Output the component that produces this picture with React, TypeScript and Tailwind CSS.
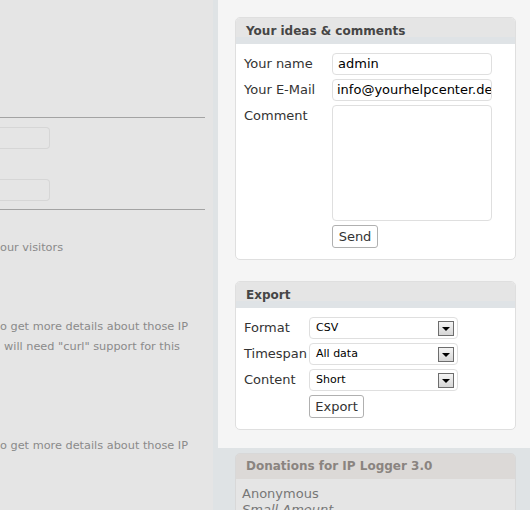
import React from "react";

const font = { fontFamily: '"DejaVu Sans", Verdana, sans-serif' };

function SelectBox({ value }: { value: string }) {
  return (
    <div className="flex h-[22px] w-[149px] items-center justify-between rounded-[4px] border border-[#dfdfdf] bg-white pl-[6px] pr-[3px]">
      <span className="text-[11px] text-black">{value}</span>
      <span className="flex h-[15px] w-[16px] items-center justify-center border border-[#6d6d6d] bg-gradient-to-b from-[#f4f4f4] to-[#d6d6d6]">
        <span className="mt-[2px] h-0 w-0 border-x-[4px] border-t-[4px] border-x-transparent border-t-black" />
      </span>
    </div>
  );
}

function Panel({ title, children }: { title: string; children: React.ReactNode }) {
  return (
    <section className="w-[281px] overflow-hidden rounded-[5px] border border-[#dfdfdf] bg-white">
      <h3 className="h-[26px] bg-[linear-gradient(#e5e5e5_0%,#e5e5e5_72%,#dfe3e6_72%,#dfe3e6_100%)] pl-[10px] pt-[6px] text-[12px] font-bold leading-[14px] text-[#464646]">
        {title}
      </h3>
      {children}
    </section>
  );
}

export default function App() {
  return (
    <div className="flex h-[510px] w-[530px] overflow-hidden text-[13px]" style={font}>
      <div className="relative w-[213px] shrink-0 bg-[#e5e5e5] text-[11.3px] text-[#8a8a8a]">
        <div className="pt-[117px] pr-[8px]">
          <div className="h-px bg-[#a3a3a3]" />
          <div className="mt-[9px] h-[22px] w-[50px] rounded-r-[4px] border border-l-0 border-[#d6d6d6]" />
          <div className="mt-[30px] h-[22px] w-[50px] rounded-r-[4px] border border-l-0 border-[#d6d6d6]" />
          <div className="mt-[8px] h-px bg-[#a3a3a3]" />
        </div>
        <p className="mt-[28px] whitespace-nowrap leading-[20px]">our visitors</p>
        <p className="mt-[59px] whitespace-nowrap leading-[20px]">o get more details about those IP</p>
        <p className="whitespace-nowrap pl-[4px] leading-[20px]">will need "curl" support for this</p>
        <p className="mt-[79px] whitespace-nowrap leading-[20px]">o get more details about those IP</p>
      </div>
      <div className="flex-1 bg-[#dfe3e5] pl-[5px]">
        <div className="h-[448px] bg-[#f5f5f5] pl-[17px] pt-[17px]">
          <Panel title="Your ideas & comments">
            <div className="grid grid-cols-[88px_1fr] gap-y-[4px] px-[8px] pb-[11px] pt-[9px] text-[#333]">
              <span className="leading-[22px]">Your name</span>
              <div className="flex h-[22px] w-[160px] items-center rounded-[4px] border border-[#dfdfdf] pl-[5px] text-black">admin</div>
              <span className="leading-[22px]">Your E-Mail</span>
              <div className="flex h-[22px] w-[160px] items-center overflow-hidden whitespace-nowrap rounded-[4px] border border-[#dfdfdf] pl-[4px] text-black">info@yourhelpcenter.de</div>
              <span className="leading-[22px]">Comment</span>
              <div className="h-[116px] w-[160px] rounded-[4px] border border-[#dfdfdf]" />
              <span />
              <button className="h-[23px] w-[46px] rounded-[3px] border border-[#b0b0b0] bg-white leading-[20px] text-[#333]">Send</button>
            </div>
          </Panel>
          <div className="h-[21px]" />
          <Panel title="Export">
            <div className="grid grid-cols-[65px_1fr] gap-y-[4px] px-[8px] pb-[11px] pt-[9px] text-[#333]">
              <span className="leading-[22px]">Format</span>
              <SelectBox value="CSV" />
              <span className="leading-[22px]">Timespan</span>
              <SelectBox value="All data" />
              <span className="leading-[22px]">Content</span>
              <SelectBox value="Short" />
              <span />
              <button className="h-[23px] w-[55px] rounded-[3px] border border-[#b0b0b0] bg-white leading-[20px] text-[#333]">Export</button>
            </div>
          </Panel>
        </div>
        <div className="pl-[17px] pt-[5px]">
          <section className="w-[281px] overflow-hidden rounded-t-[5px] border border-[#d8d8d8] bg-[#e5e5e5]">
            <h3 className="h-[25px] bg-[#dcd9d7] pl-[10px] pt-[5px] text-[12px] font-bold leading-[14px] text-[#8a8480]">
              Donations for IP Logger 3.0
            </h3>
            <div className="px-[6px] pt-[7px] leading-[16px] text-[#777]">
              <p>Anonymous</p>
              <p className="italic">Small Amount</p>
            </div>
          </section>
        </div>
      </div>
    </div>
  );
}
